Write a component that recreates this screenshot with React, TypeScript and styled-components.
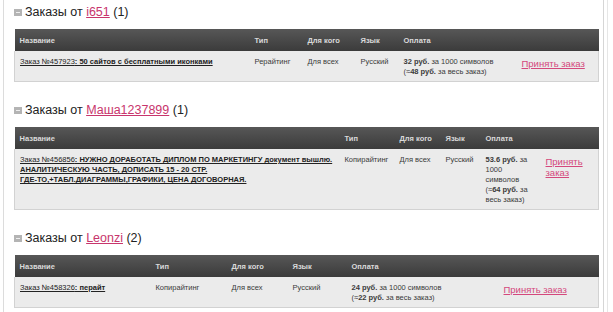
import React from "react"
import styled, { createGlobalStyle } from "styled-components"

const GlobalStyle = createGlobalStyle`
  html, body {
    margin: 0;
    background: #fff;
    font-family: "Liberation Sans", Arial, sans-serif;
  }
`

const Outer = styled.div`
  width: 608px;
  min-height: 312px;
  border-right: 1px solid #e6e6e6;
  box-sizing: border-box;
`

const Frame = styled.div`
  box-sizing: border-box;
  margin-left: 3px;
  width: 601px;
  min-height: 312px;
  padding: 3px 5px 0 10px;
  border-left: 1px solid #dcdcdc;
  border-right: 1px solid #d6d6d6;
`

const Section = styled.section`
  margin-bottom: 19px;
`

const Heading = styled.h2`
  display: flex;
  align-items: center;
  height: 18px;
  margin: 0 0 8px;
  font-size: 12.5px;
  font-weight: normal;
  color: #222;
  white-space: pre;
`

const Toggle = styled.span`
  position: relative;
  width: 8px;
  height: 7px;
  margin-right: 3px;
  background: #b4b4b4;

  &::after {
    content: "";
    position: absolute;
    left: 2px;
    right: 2px;
    top: 3px;
    height: 1px;
    background: #eee;
  }
`

const UserLink = styled.a`
  color: #c8356c;
  text-decoration: underline;
`

const Table = styled.table`
  width: 100%;
  border-collapse: collapse;
  table-layout: fixed;
`

const Col = styled.col<{ $w: number }>`
  width: ${({ $w }) => $w}px;
`

const Th = styled.th`
  height: 22px;
  padding: 0 5px;
  text-align: left;
  font-size: 7.5px;
  font-weight: bold;
  color: #dadada;
  background: linear-gradient(to bottom, #575757 0%, #3b3b3b 100%);
`

const Td = styled.td`
  padding: 6px 5px 4px;
  vertical-align: top;
  font-size: 7.5px;
  line-height: 10px;
  color: #3a3a3a;
  background: #ebebeb;
  border-bottom: 1px solid #d2d2d2;

  &:first-child {
    border-left: 1px solid #d2d2d2;
  }
  &:last-child {
    border-right: 1px solid #d2d2d2;
  }
`

const OrderLink = styled.a`
  color: #222;
  text-decoration: underline;
  white-space: nowrap;

  b {
    font-weight: bold;
  }
`

const Accept = styled.a`
  display: inline-block;
  margin-top: 1px;
  font-size: 9.5px;
  line-height: 11px;
  color: #d4487c;
  text-decoration: underline;
`

type Order = {
  user: string
  count: number
  cols: number[]
  number: string
  title: React.ReactNode
  type: string
  price: string
  total: string
}

const orders: Order[] = [
  {
    user: "i651",
    count: 1,
    cols: [235, 53, 53, 43, 118, 82],
    number: "Заказ №457923",
    title: ": 50 сайтов с бесплатными иконками",
    type: "Рерайтинг",
    price: "32 руб.",
    total: "48 руб.",
  },
  {
    user: "Маша1237899",
    count: 1,
    cols: [325, 55, 46, 40, 60, 58],
    number: "Заказ №456856",
    title: (
      <>
        : НУЖНО ДОРАБОТАТЬ ДИПЛОМ ПО МАРКЕТИНГУ документ вышлю.
        <br />
        АНАЛИТИЧЕСКУЮ ЧАСТЬ, ДОПИСАТЬ 15 - 20 СТР.
        <br />
        ГДЕ-ТО,+ТАБЛ.ДИАГРАММЫ,ГРАФИКИ, ЦЕНА ДОГОВОРНАЯ.
      </>
    ),
    type: "Копирайтинг",
    price: "53.6 руб.",
    total: "64 руб.",
  },
  {
    user: "Leonzi",
    count: 2,
    cols: [136, 76, 61, 59, 152, 100],
    number: "Заказ №458326",
    title: ": перайт",
    type: "Копирайтинг",
    price: "24 руб.",
    total: "22 руб.",
  },
]

const headers = ["Название", "Тип", "Для кого", "Язык", "Оплата", ""]

const OrderTable: React.FC<{ order: Order }> = ({ order }) => (
  <Table>
    <colgroup>
      {order.cols.map((w, i) => (
        <Col key={i} $w={w} />
      ))}
    </colgroup>
    <thead>
      <tr>
        {headers.map((h, i) => (
          <Th key={i}>{h}</Th>
        ))}
      </tr>
    </thead>
    <tbody>
      <tr>
        <Td>
          <OrderLink href="#">
            {order.number}
            <b>{order.title}</b>
          </OrderLink>
        </Td>
        <Td>{order.type}</Td>
        <Td>Для всех</Td>
        <Td>Русский</Td>
        <Td>
          <b>{order.price}</b> за 1000 символов
          <br />
          (≈<b>{order.total}</b> за весь заказ)
        </Td>
        <Td>
          <Accept href="#">Принять заказ</Accept>
        </Td>
      </tr>
    </tbody>
  </Table>
)

export default function App() {
  return (
    <>
      <GlobalStyle />
      <Outer>
        <Frame>
          {orders.map((o) => (
            <Section key={o.user}>
              <Heading>
                <Toggle />
                Заказы от <UserLink href="#">{o.user}</UserLink> ({o.count})
              </Heading>
              <OrderTable order={o} />
            </Section>
          ))}
        </Frame>
      </Outer>
    </>
  )
}
